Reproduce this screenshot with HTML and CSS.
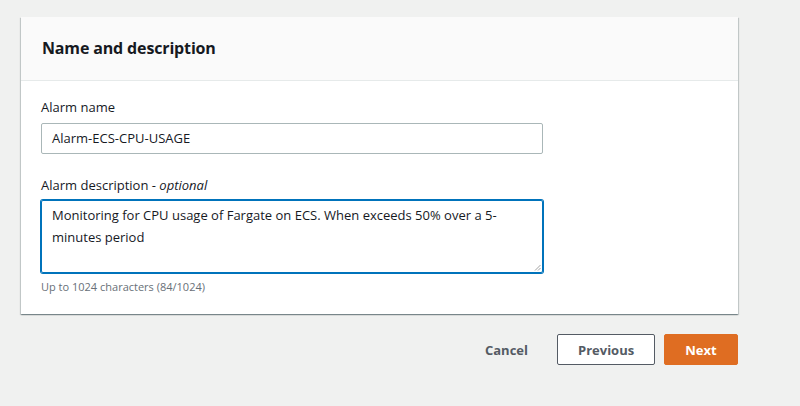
FILE: index.html
```html
<!DOCTYPE html>
<html>
<head>
<meta charset="utf-8">
<link rel="stylesheet" href="styles.css">
</head>
<body>
<div class="page">
  <section class="card">
    <header class="card-header">
      <h2 class="card-title">Name and description</h2>
    </header>
    <div class="card-body">
      <div class="field">
        <label class="label">Alarm name</label>
        <div class="input">Alarm-ECS-CPU-USAGE</div>
      </div>
      <div class="field">
        <label class="label">Alarm description - <i>optional</i></label>
        <div class="textarea">Monitoring for CPU usage of Fargate on ECS. When exceeds 50% over a 5-minutes period
          <svg class="grip" width="7" height="7" viewBox="0 0 7 7"><path d="M1 6.5L6.5 1M4 6.5L6.5 4" stroke="#8c8c8c" stroke-width="0.8" fill="none"/></svg>
        </div>
        <div class="hint">Up to 1024 characters (84/1024)</div>
      </div>
    </div>
  </section>
  <div class="actions">
    <button class="btn btn-link">Cancel</button>
    <button class="btn btn-normal">Previous</button>
    <button class="btn btn-primary">Next</button>
  </div>
</div>
</body>
</html>
```
FILE: styles.css
```css
* { box-sizing: border-box; }
html, body { margin: 0; padding: 0; }
body {
  background: #f0f1f0;
  font-family: "Open Sans", "Noto Sans", sans-serif;
  color: #16191f;
  width: 800px;
  height: 406px;
  overflow: hidden;
}
.page {
  padding: 17px 62px 0 21px;
}
.card {
  background: #fff;
  box-shadow: 0 1px 1px 0 rgba(0,28,36,0.3), 1px 1px 1px 0 rgba(0,28,36,0.15), -1px 1px 1px 0 rgba(0,28,36,0.15);
}
.card-header {
  background: #fafafa;
  border-bottom: 1px solid #e6eaea;
  height: 64px;
  display: flex;
  align-items: center;
  padding: 0 21px 2px;
}
.card-title {
  margin: 0;
  font-size: 16px;
  font-weight: 700;
  line-height: 20px;
  letter-spacing: -0.15px;
}
.card-body {
  padding: 16px 20px 19px 20px;
}
.field + .field { margin-top: 21px; }
.label {
  display: block;
  font-size: 13px;
  line-height: 20px;
  margin-bottom: 6px;
}
.field + .field .label { margin-bottom: 5px; }
.input {
  width: 502px;
  height: 31px;
  border: 1px solid #aab7b8;
  border-radius: 2px;
  padding: 0 10px;
  font-size: 13px;
  line-height: 29px;
}
.textarea {
  position: relative;
  width: 502px;
  height: 73px;
  border: 1px solid #0073bb;
  box-shadow: 0 0 0 1px #0073bb;
  border-radius: 2px;
  padding: 3px 10px 4px;
  font-size: 13px;
  line-height: 22px;
}
.grip {
  position: absolute;
  right: 1px;
  bottom: 1px;
}
.hint {
  font-size: 11px;
  color: #687078;
  margin-top: 6px;
  line-height: 16px;
}
.actions {
  display: flex;
  justify-content: flex-end;
  align-items: center;
  gap: 9px;
  margin-top: 20px;
}
.btn {
  font-family: inherit;
  font-size: 13px;
  font-weight: 700;
  height: 31px;
  border-radius: 2px;
  padding: 0 20px;
  cursor: pointer;
}
.btn-link {
  background: none;
  border: none;
  color: #545b64;
}
.btn-normal {
  background: #fff;
  border: 1px solid #545b64;
  color: #545b64;
  width: 98px;
}
.btn-primary {
  background: #df6d22;
  border: 1px solid #df6d22;
  color: #fff;
  width: 74px;
}
```
